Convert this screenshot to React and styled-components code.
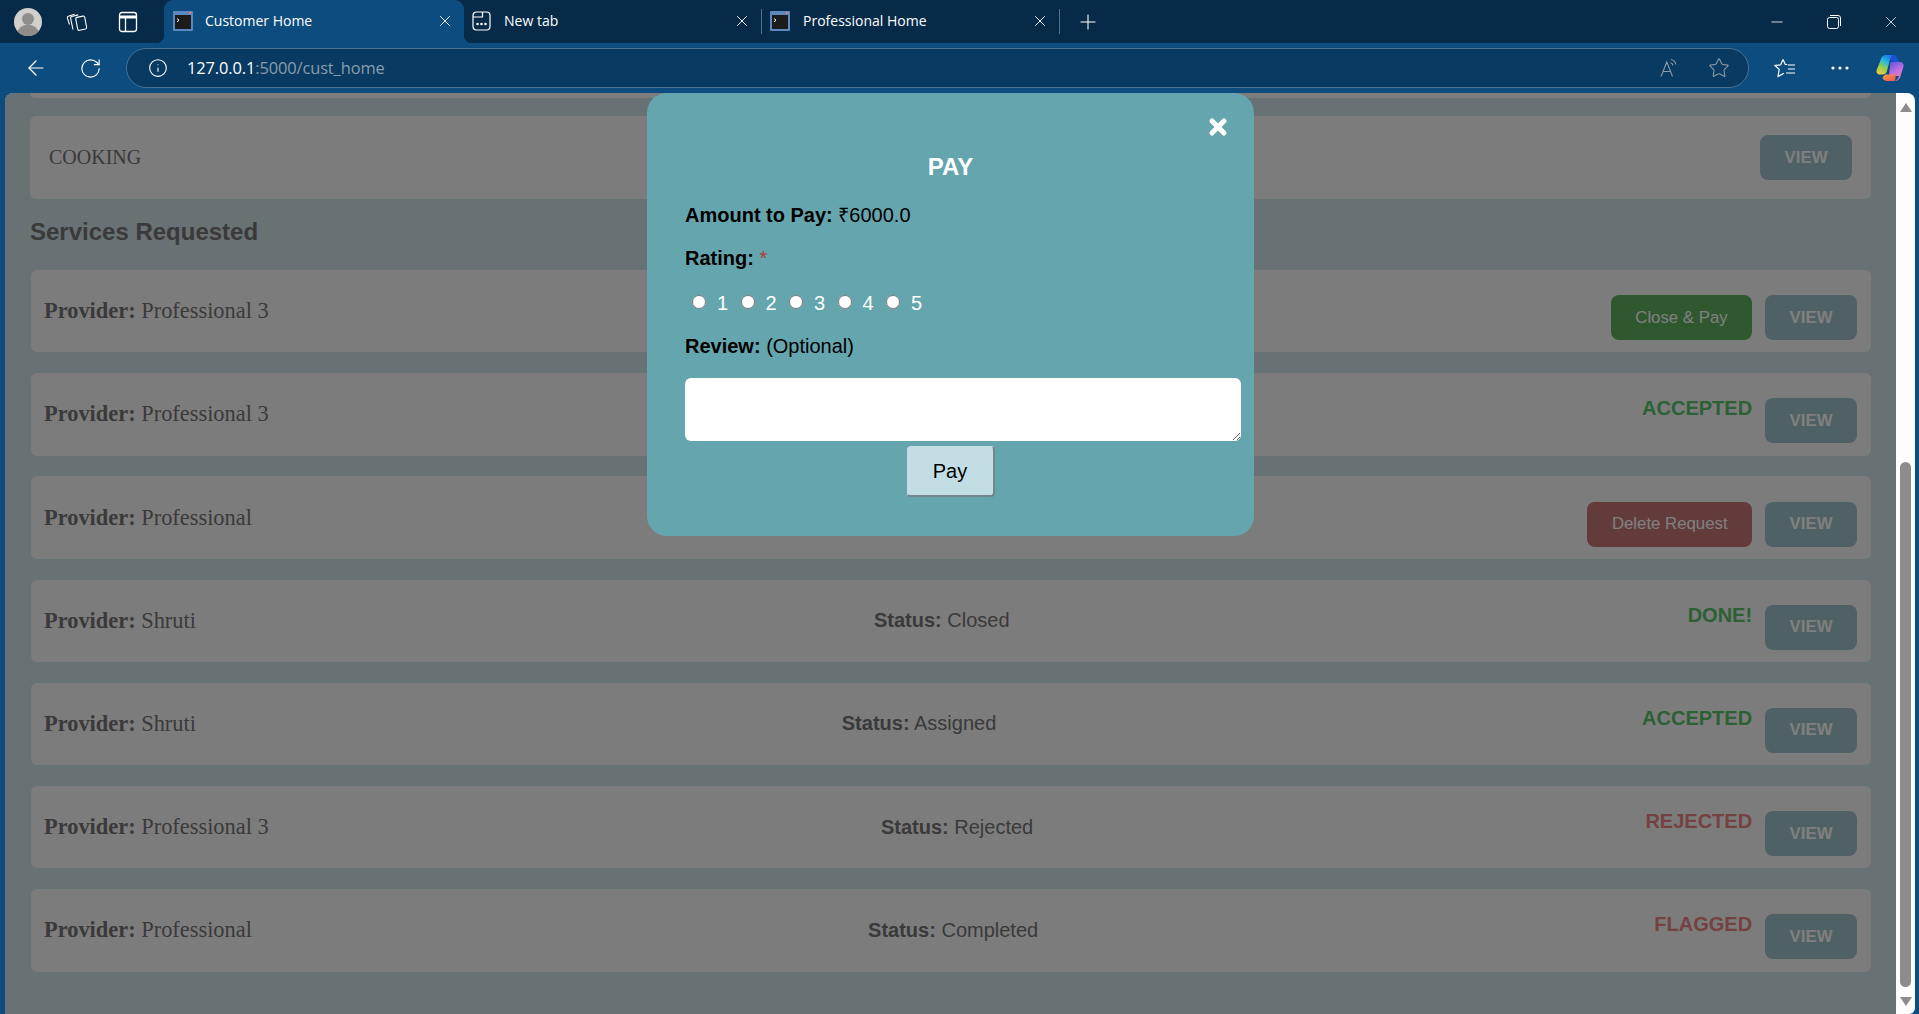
import React from 'react';
import styled, { createGlobalStyle } from 'styled-components';
import { ArrowLeft, RotateCw, Info, Star, Plus, X, Minus } from 'lucide-react';

const GlobalStyle = createGlobalStyle`
  html, body {
    margin: 0;
    padding: 0;
    overflow: hidden;
    background: #0c4c7e;
  }
  * { box-sizing: border-box; }
`;

const requests = [
  { provider: 'Professional 3', status: 'Requested', hideStatus: true, action: 'pay' },
  { provider: 'Professional 3', hideStatus: true, label: 'ACCEPTED', tone: 'good' },
  { provider: 'Professional', hideStatus: true, action: 'delete' },
  { provider: 'Shruti', status: 'Closed', label: 'DONE!', tone: 'good' },
  { provider: 'Shruti', status: 'Assigned', label: 'ACCEPTED', tone: 'good' },
  { provider: 'Professional 3', status: 'Rejected', label: 'REJECTED', tone: 'bad' },
  { provider: 'Professional', status: 'Completed', label: 'FLAGGED', tone: 'bad' },
];

const Shell = styled.div`
  width: 1919px;
  height: 1014px;
  display: flex;
  flex-direction: column;
  overflow: hidden;
  font-family: "Liberation Sans", Arial, sans-serif;
`;

/* browser chrome */
const TabBar = styled.div`
  height: 43px;
  flex: none;
  display: flex;
  align-items: stretch;
  background: #062a48;
  color: #fff;
  font-family: "Open Sans", sans-serif;
  font-size: 14px;
`;

const BarGroup = styled.div`
  display: flex;
  align-items: center;
  gap: 1px;
  padding-left: 3px;
  margin-right: 9px;
`;

const Slot = styled.div`
  width: ${(p) => p.$w || 50}px;
  height: 100%;
  flex: none;
  display: flex;
  align-items: center;
  justify-content: center;
  color: ${(p) => p.$color || '#fff'};
`;

const Tab = styled.div`
  position: relative;
  width: ${(p) => (p.$active ? 300 : 297)}px;
  flex: none;
  display: flex;
  align-items: center;
  gap: ${(p) => (p.$active ? 12 : 13)}px;
  padding: 0 10px 2px ${(p) => (p.$active ? 9 : 8)}px;
  background: ${(p) => (p.$active ? '#0c4c7e' : 'transparent')};
  border-radius: 9px 9px 0 0;

  ${(p) =>
    p.$active &&
    `
    &::before, &::after {
      content: '';
      position: absolute;
      bottom: 0;
      width: 8px;
      height: 8px;
    }
    &::before {
      left: -8px;
      background: radial-gradient(circle at 0 0, transparent 8px, #0c4c7e 8.5px);
    }
    &::after {
      right: -8px;
      background: radial-gradient(circle at 100% 0, transparent 8px, #0c4c7e 8.5px);
    }
  `}
`;

const TabTitle = styled.span`
  flex: 1;
  white-space: nowrap;
`;

const TabDivider = styled.div`
  width: 1px;
  flex: none;
  margin: 9px 0;
  background: #54728a;
`;

const WindowControls = styled.div`
  margin-left: auto;
  display: flex;
`;

const Toolbar = styled.div`
  height: 50px;
  flex: none;
  display: flex;
  align-items: center;
  padding: 0 7px 0 8px;
  background: #0c4c7e;
`;

const AddressBar = styled.div`
  flex: 1;
  height: 40px;
  margin: 0 8px;
  display: flex;
  align-items: center;
  padding: 0 5px 0 21px;
  background: #083a62;
  border: 1px solid #4a7394;
  border-radius: 20px;
  color: #fff;
  font-family: "Open Sans", sans-serif;
  font-size: 16.4px;
`;

const UrlText = styled.span`
  margin: 0 0 2px 19px;
  flex: 1;
  letter-spacing: -0.1px;

  span {
    color: #8a9dab;
  }
`;

const AddressIcon = styled.div`
  width: 49px;
  display: flex;
  justify-content: center;
  color: #8d9aa5;
`;

/* page */
const Viewport = styled.div`
  flex: 1;
  min-height: 0;
  display: flex;
  padding: 0 4px 0 5px;
  background: #0c4c7e;
`;

const Page = styled.main`
  position: relative;
  flex: 1;
  min-width: 0;
  padding: 0 25px;
  background: #d0e2e6;
  border-top-left-radius: 8px;
  overflow: hidden;
`;

const Scrollbar = styled.div`
  width: 19px;
  flex: none;
  display: flex;
  flex-direction: column;
  align-items: center;
  padding-top: 10px;
  background: #fdfdfd;
  border-top-right-radius: 8px;
  border-bottom-right-radius: 6px;
`;

const ScrollArrow = styled.div`
  width: 0;
  height: 0;
  border-left: 6px solid transparent;
  border-right: 6px solid transparent;
  ${(p) => (p.$down ? 'border-top' : 'border-bottom')}: 9px solid #8c8c8c;
`;

const ScrollThumb = styled.div`
  width: 11px;
  height: 525px;
  margin: auto 0 10px;
  border-radius: 6px;
  background: #8c8c8c;
`;

const ScrollEnd = styled.div`
  height: 8px;
`;

const CutCard = styled.div`
  height: 5px;
  background: #f9f9f9;
  border-radius: 0 0 6px 6px;
`;

const ServiceCard = styled.section`
  height: 83px;
  margin-top: 18px;
  display: flex;
  align-items: center;
  justify-content: space-between;
  padding: 0 19px;
  background: #f9f9f9;
  border-radius: 6px;
`;

const ServiceName = styled.span`
  font-family: "Liberation Serif", "Times New Roman", serif;
  font-size: 20px;
  color: #757575;
`;

const Heading = styled.h2`
  margin: 19px 0 24px;
  font-size: 24px;
  line-height: 28px;
  font-weight: 700;
  color: #757575;
`;

const RequestList = styled.div`
  display: flex;
  flex-direction: column;
  gap: 20.8px;
  margin-left: 1px;
`;

const RequestRow = styled.article`
  height: 82.4px;
  display: flex;
  align-items: center;
  justify-content: space-between;
  padding: 0 14px 0 13px;
  background: #f9f9f9;
  border-radius: 6px;
`;

const Provider = styled.div`
  font-family: "Liberation Serif", "Times New Roman", serif;
  font-size: 22.4px;
  color: #757575;
`;

const Status = styled.div`
  font-size: 20px;
  color: #757575;
  visibility: ${(p) => (p.$hidden ? 'hidden' : 'visible')};
`;

const Actions = styled.div`
  display: flex;
  align-items: flex-start;
  gap: 13px;
  margin-top: ${(p) => (p.$flat ? 0 : 13)}px;
`;

const StateLabel = styled.span`
  margin-top: -1px;
  font-size: 20px;
  line-height: 23px;
  font-weight: 700;
  color: ${(p) => (p.$tone === 'bad' ? '#e88484' : '#5cc06a')};
`;

const ActionButton = styled.button`
  height: 45px;
  padding: 0 24.5px;
  border: 0;
  border-radius: 8px;
  font-family: "Liberation Sans", Arial, sans-serif;
  font-size: 16.8px;
  font-weight: ${(p) => (p.$tone === 'view' ? 700 : 400)};
  color: #fff;
  background: ${(p) =>
    p.$tone === 'pay' ? '#60b05e' : p.$tone === 'delete' ? '#c67676' : '#9ec2c8'};
`;

/* modal */
const Overlay = styled.div`
  position: absolute;
  inset: 0;
  display: flex;
  justify-content: center;
  align-items: flex-start;
  background: rgba(0, 0, 0, 0.5);
`;

const Modal = styled.div`
  position: relative;
  width: 607px;
  height: 443px;
  padding: 60px 38px 0;
  background: #65a5ae;
  border-radius: 20px;
  font-size: 20px;
  color: #000;
`;

const CloseMark = styled.div`
  position: absolute;
  top: 22px;
  right: 24px;
  display: flex;
  color: #fff;
`;

const ModalTitle = styled.h3`
  margin: 0 0 23px;
  text-align: center;
  font-size: 24px;
  line-height: 28px;
  color: #fff;
`;

const Line = styled.p`
  margin: 0 0 ${(p) => p.$gap || 20}px;
  line-height: 23px;
`;

const Required = styled.span`
  color: #b23a3a;
`;

const RatingRow = styled.div`
  display: flex;
  align-items: center;
  height: 23px;
  margin-bottom: 20.5px;
  padding-left: 7px;
  color: #fff;
`;

const RatingOption = styled.label`
  display: flex;
  align-items: center;
  width: 48.5px;
  flex: none;
`;

const Radio = styled.input`
  width: 14px;
  height: 14px;
  margin: -2px 11px 0 0;
  flex: none;
`;

const ReviewBox = styled.textarea`
  display: block;
  width: 556px;
  height: 63px;
  border: 0;
  outline: 0;
  border-radius: 6px;
  background: #fff;
`;

const PayButton = styled.button`
  display: block;
  width: 88px;
  height: 51px;
  margin: 5px auto 0;
  background: #c3dde5;
  border: 1px solid #c3dde5;
  border-right: 2px solid #76878c;
  border-bottom: 2px solid #76878c;
  border-radius: 4px;
  font-family: inherit;
  font-size: 20px;
  color: #000;
`;

/* drawn icons */
const Avatar = () => (
  <svg width="28" height="28" viewBox="0 0 28 28">
    <circle cx="14" cy="14" r="14" fill="#d2d0cc" />
    <circle cx="14" cy="11" r="6" fill="#8f8d89" />
    <path d="M3.500 23.500c2-5 6-6.500 10.500-6.500s8.500 1.500 10.500 6.500a14 14 0 0 1-21 0z" fill="#8f8d89" />
  </svg>
);

const CollectionsIcon = () => (
  <svg width="24" height="24" viewBox="0 0 24 24" fill="none" stroke="#fff" strokeWidth="1.100">
    <path d="M4.500 14.500 2.400 8.200c-.3-.9.100-1.600.9-1.900l6.200-2.100" />
    <path d="M8 19.500 5.600 8.300c-.2-.9.300-1.600 1.100-1.800l6.500-1.600" />
    <path d="M10.800 9.200c-.2-.9.300-1.600 1.100-1.800l6-1.300c.9-.2 1.600.3 1.800 1.100l1.900 10c.2.900-.3 1.600-1.100 1.800l-6 1.300c-.9.200-1.600-.3-1.800-1.100z" />
  </svg>
);

const LayoutIcon = () => (
  <svg width="20" height="22" viewBox="0 0 20 22" fill="none" stroke="#fff" strokeWidth="1.300">
    <rect x="1.500" y="1.500" width="17" height="19" rx="2.500" />
    <path d="M1.500 6h17" strokeWidth="3" />
    <path d="M7.500 6v14.500" />
  </svg>
);

const ConsoleFavicon = () => (
  <svg width="20" height="20" viewBox="0 0 20 20">
    <rect width="20" height="20" rx="1" fill="#5d88bd" />
    <rect x="2" y="4" width="16" height="14" fill="#1b1b1b" />
    <path d="M4 7.500 6 9.200 4 11" fill="none" stroke="#fff" strokeWidth="1" />
    <rect x="16" y="1" width="2.500" height="2" fill="#d77a7a" />
  </svg>
);

const NewTabFavicon = () => (
  <svg width="19" height="20" viewBox="0 0 19 20" fill="none" stroke="#fff" strokeWidth="1.200">
    <rect x="1" y="1" width="17" height="18" rx="3.500" />
    <path d="M1 6h9.500V1" />
    <circle cx="5.500" cy="13" r=".7" fill="#fff" />
    <circle cx="9.500" cy="13" r=".7" fill="#fff" />
    <circle cx="13.500" cy="13" r=".7" fill="#fff" />
  </svg>
);

const RestoreIcon = () => (
  <svg width="14" height="14" viewBox="0 0 14 14" fill="none" stroke="#fff" strokeWidth="1">
    <rect x=".5" y="2.500" width="11" height="11" rx="2" />
    <path d="M3 .5h8a2.500 2.500 0 0 1 2.500 2.500v8" />
  </svg>
);

const ReadAloudIcon = () => (
  <svg width="20" height="20" viewBox="0 0 20 20" fill="none" stroke="#8d9aa5" strokeWidth="1.100">
    <path d="M1 18.500 6.800 4l5.700 14.500M3 13.500h7.500" />
    <path d="M11 1.500c2.500.5 4.300 2.300 4.800 4.800M10.500 4.800c1.300.3 2.200 1.200 2.500 2.500" />
  </svg>
);

const FavoritesIcon = () => (
  <svg width="22" height="20" viewBox="0 0 22 20" fill="none" stroke="#fff" strokeWidth="1.200">
    <path d="M9 1.500 11.300 6.500h2M6.700 6.800 1 7.500l4.200 3.900L4 18.500l6-3.200M9 1.500 6.700 6.800" />
    <path d="M14 7h7M14 11h7M12 15h9" />
  </svg>
);

const DotsIcon = () => (
  <svg width="18" height="4" viewBox="0 0 18 4" fill="#fff">
    <circle cx="2" cy="2" r="1.600" />
    <circle cx="9" cy="2" r="1.600" />
    <circle cx="16" cy="2" r="1.600" />
  </svg>
);

const CopilotLogo = () => (
  <svg width="28" height="28" viewBox="0 0 28 28">
    <defs>
      <linearGradient id="cpA" x1="0.700" y1="0" x2="0.200" y2="1">
        <stop offset="0" stopColor="#1b6fe8" />
        <stop offset="0.350" stopColor="#27b5e5" />
        <stop offset="0.650" stopColor="#8fd14f" />
        <stop offset="1" stopColor="#f6c93b" />
      </linearGradient>
      <linearGradient id="cpB" x1="0.300" y1="0" x2="0.700" y2="1">
        <stop offset="0" stopColor="#6a5ce0" />
        <stop offset="0.500" stopColor="#c56fe0" />
        <stop offset="1" stopColor="#f07fb0" />
      </linearGradient>
      <linearGradient id="cpC" x1="0" y1="0" x2="1" y2="1">
        <stop offset="0" stopColor="#f6a33b" />
        <stop offset="1" stopColor="#ee4d5f" />
      </linearGradient>
    </defs>
    <path d="M10 1h9c-3 .5-4.500 2.500-5.300 5.500L11 17c-.6 2.300-2 3.500-4.500 3.500H4c-2.500 0-4-2-3.300-4.500L5 5c.8-2.700 2.500-4 5-4z" fill="url(#cpA)" />
    <path d="M17 1c2.500 0 4 1.300 4.800 3.800L23 8h-6l-3-2c1-3 2-5 3-5z" fill="#1d4fd0" />
    <path d="M14.500 8H24c2.500 0 4 2 3.500 4.500l-2.800 9C24 24.500 22 27 19 27c3-1 3.500-3.500 4-5H13z" fill="url(#cpB)" />
    <path d="M9 20.500h11l-1 6.500H11c-2.500 0-4-1.500-4.500-3.500z" fill="url(#cpC)" />
  </svg>
);

const View = () => <ActionButton $tone="view">VIEW</ActionButton>;

const App = () => {
  return (
    <Shell>
      <GlobalStyle />
      <TabBar>
        <BarGroup>
          <Slot><Avatar /></Slot>
          <Slot $w={46}><CollectionsIcon /></Slot>
          <Slot $w={54}><LayoutIcon /></Slot>
        </BarGroup>
        <Tab $active>
          <ConsoleFavicon />
          <TabTitle>Customer Home</TabTitle>
          <X size={18} strokeWidth={1.25} />
        </Tab>
        <Tab>
          <NewTabFavicon />
          <TabTitle>New tab</TabTitle>
          <X size={18} strokeWidth={1.25} />
        </Tab>
        <TabDivider />
        <Tab>
          <ConsoleFavicon />
          <TabTitle>Professional Home</TabTitle>
          <X size={18} strokeWidth={1.25} />
        </Tab>
        <TabDivider />
        <Slot $w={56}><Plus size={24} strokeWidth={1.1} /></Slot>
        <WindowControls>
          <Slot $w={57}><Minus size={18} strokeWidth={1.1} /></Slot>
          <Slot $w={57}><RestoreIcon /></Slot>
          <Slot $w={57}><X size={18} strokeWidth={1} /></Slot>
        </WindowControls>
      </TabBar>

      <Toolbar>
        <Slot $w={55}><ArrowLeft size={24} strokeWidth={1.2} /></Slot>
        <Slot $w={55}><RotateCw size={23} strokeWidth={1.2} /></Slot>
        <AddressBar>
          <Info size={20} strokeWidth={1.3} />
          <UrlText>127.0.0.1<span>:5000/cust_home</span></UrlText>
          <AddressIcon><ReadAloudIcon /></AddressIcon>
          <AddressIcon><Star size={22} strokeWidth={1.2} /></AddressIcon>
        </AddressBar>
        <Slot $w={55}><FavoritesIcon /></Slot>
        <Slot $w={55}><DotsIcon /></Slot>
        <Slot $w={45}><CopilotLogo /></Slot>
      </Toolbar>

      <Viewport>
        <Page>
          <CutCard />
          <ServiceCard>
            <ServiceName>COOKING</ServiceName>
            <Actions $flat><View /></Actions>
          </ServiceCard>
          <Heading>Services Requested</Heading>
          <RequestList>
            {requests.map((r, i) => (
              <RequestRow key={i}>
                <Provider><b>Provider:</b> {r.provider}</Provider>
                <Status $hidden={r.hideStatus}><b>Status:</b> {r.status}</Status>
                <Actions>
                  {r.label && <StateLabel $tone={r.tone}>{r.label}</StateLabel>}
                  {r.action === 'pay' && <ActionButton $tone="pay">Close &amp; Pay</ActionButton>}
                  {r.action === 'delete' && <ActionButton $tone="delete">Delete Request</ActionButton>}
                  <View />
                </Actions>
              </RequestRow>
            ))}
          </RequestList>

          <Overlay>
            <Modal>
              <CloseMark><X size={24} strokeWidth={5} /></CloseMark>
              <ModalTitle>PAY</ModalTitle>
              <Line><b>Amount to Pay:</b> ₹6000.0</Line>
              <Line $gap={21.5}><b>Rating:</b> <Required>*</Required></Line>
              <RatingRow>
                {[1, 2, 3, 4, 5].map((n) => (
                  <RatingOption key={n}>
                    <Radio type="radio" name="rating" />
                    {n}
                  </RatingOption>
                ))}
              </RatingRow>
              <Line><b>Review:</b> (Optional)</Line>
              <ReviewBox />
              <PayButton>Pay</PayButton>
            </Modal>
          </Overlay>
        </Page>
        <Scrollbar>
          <ScrollArrow />
          <ScrollThumb />
          <ScrollArrow $down />
          <ScrollEnd />
        </Scrollbar>
      </Viewport>
    </Shell>
  );
};

export default App;
